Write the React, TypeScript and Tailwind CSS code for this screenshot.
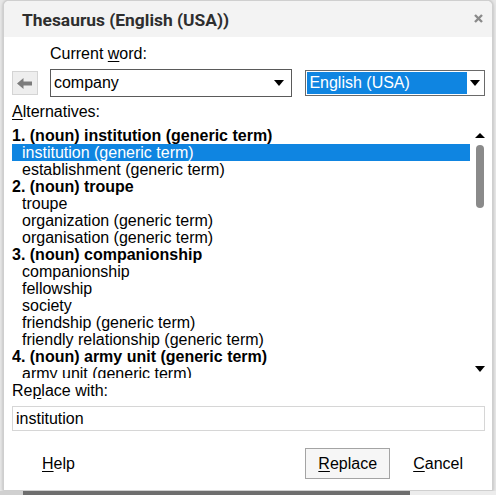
import React from "react";

const FONT = { fontFamily: '"Liberation Sans", Arial, sans-serif' };

type Row = { t: string; h?: boolean; sel?: boolean };
const rows: Row[] = [
  { t: "1. (noun) institution (generic term)", h: true },
  { t: "institution (generic term)", sel: true },
  { t: "establishment (generic term)" },
  { t: "2. (noun) troupe", h: true },
  { t: "troupe" },
  { t: "organization (generic term)" },
  { t: "organisation (generic term)" },
  { t: "3. (noun) companionship", h: true },
  { t: "companionship" },
  { t: "fellowship" },
  { t: "society" },
  { t: "friendship (generic term)" },
  { t: "friendly relationship (generic term)" },
  { t: "4. (noun) army unit (generic term)", h: true },
  { t: "army unit (generic term)" },
];

function Down({ className = "" }: { className?: string }) {
  return (
    <svg width="10" height="6" viewBox="0 0 10 6" className={className}>
      <path d="M0 0 H10 L5 6 Z" fill="#000" />
    </svg>
  );
}

export default function App() {
  return (
    <div
      className="w-[496px] h-[495px] bg-[#e6e6e6] flex flex-col overflow-hidden text-black"
      style={FONT}
    >
      <div className="ml-[3px] w-[490px] h-[491px] shrink-0 bg-white rounded-t-[6px] border border-[#cfcfcf] shadow-[0_0_3px_rgba(0,0,0,0.25)] flex flex-col overflow-hidden">
        {/* title bar */}
        <div className="h-[36px] shrink-0 bg-[#f3f3f3] flex items-center pl-[18px] pr-[9px] justify-between">
          <span
            className="text-[17.4px] font-bold text-[#2e2e2e] leading-[20px] pt-[1px]"
            style={{ fontFamily: 'Roboto, "Liberation Sans", sans-serif' }}
          >
            Thesaurus (English (USA))
          </span>
          <svg width="9" height="9" viewBox="0 0 9 9" className="mb-[2px]">
            <path d="M1 1 L8 8 M8 1 L1 8" stroke="#8a8a8a" strokeWidth="2.4" />
          </svg>
        </div>

        {/* body */}
        <div className="flex flex-col pl-[8px] pr-[7px] text-[16px]">
          <div className="mt-[8px] pl-[38px] leading-[18px] h-[18px]">
            Current <span className="underline underline-offset-2">w</span>ord:
          </div>

          <div className="mt-[6px] h-[28px] flex items-center">
            <div className="w-[26px] h-[24px] bg-[#eeeeee] border border-[#d4d4d4] flex items-center justify-center">
              <svg width="15" height="11" viewBox="0 0 15 11">
                <path d="M0 5.5 L6.5 0 V3.5 H15 V7.5 H6.5 V11 Z" fill="#7c7c7c" />
              </svg>
            </div>
            <div className="ml-[12px] w-[243px] h-[28px] border border-[#5a5a5a] flex items-center pl-[3px] pr-[5px] justify-between">
              <span className="leading-[18px]">company</span>
              <Down className="mr-[2px]" />
            </div>
            <div className="ml-[13px] w-[180px] h-[26px] border border-[#6a6a6a] flex items-center pl-[1px] pr-[4px] justify-between">
              <span className="w-[160px] h-[22px] bg-[#0f85e1] text-white leading-[22px] pl-[2px]">
                English (USA)
              </span>
              <Down />
            </div>
          </div>

          <div className="mt-[6px] leading-[18px] h-[18px]">
            <span className="underline underline-offset-2">A</span>lternatives:
          </div>

          <div className="mt-[5px] h-[252px] flex overflow-hidden">
            <div className="w-[458px] pt-[1px] flex flex-col">
              {rows.map((r, i) => (
                <div
                  key={i}
                  className={
                    "h-[17px] shrink-0 leading-[17px] whitespace-nowrap " +
                    (r.h ? "font-bold " : "pl-[10px] ") +
                    (r.sel ? "bg-[#0f85e1] text-white" : "")
                  }
                >
                  {r.t}
                </div>
              ))}
            </div>
            <div className="w-[15px] flex flex-col items-center">
              <svg width="10" height="5" viewBox="0 0 10 5" className="mt-[7px] ml-[4px]">
                <path d="M0 5 H10 L5 0 Z" fill="#000" />
              </svg>
              <div className="mt-[7px] ml-[4px] w-[8px] h-[63px] rounded-full bg-[#8a8a8a]" />
              <div className="flex-1" />
              <Down className="mb-[6px] ml-[4px]" />
            </div>
          </div>

          <div className="mt-[4px] leading-[18px] h-[18px]">
            Re<span className="underline underline-offset-2">p</span>lace with:
          </div>

          <div className="mt-[6px] h-[25px] border border-[#d6d6d6] flex items-center pl-[3px]">
            <span className="leading-[18px]">institution</span>
          </div>

          <div className="mt-[17px] h-[31px] flex items-center">
            <span className="ml-[30px] leading-[18px]">
              <span className="underline underline-offset-2">H</span>elp
            </span>
            <div className="flex-1" />
            <div className="w-[85px] h-[31px] border border-[#a4a4a4] bg-[#f6f6f6] flex items-center justify-center">
              <span className="leading-[18px]">
                <span className="underline underline-offset-2">R</span>eplace
              </span>
            </div>
            <span className="ml-[23px] mr-[22px] leading-[18px]">
              <span className="underline underline-offset-2">C</span>ancel
            </span>
          </div>
        </div>
      </div>
      <div className="h-[4px] flex">
        <div className="w-[23px] bg-[#d0d0d0]" />
        <div className="w-[387px] bg-[#6e6e6e]" />
        <div className="flex-1 bg-[#ececec]" />
      </div>
    </div>
  );
}
